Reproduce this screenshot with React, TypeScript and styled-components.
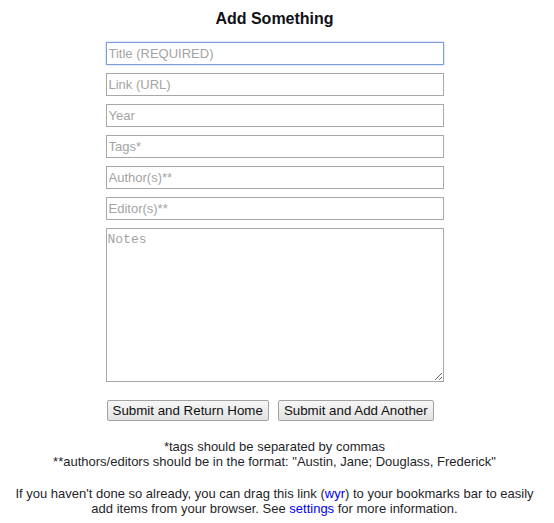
import styled, { createGlobalStyle } from "styled-components";

const GlobalStyle = createGlobalStyle`
  html, body {
    margin: 0;
    padding: 0;
    background: #ffffff;
  }
  body {
    font-family: "Liberation Sans", Arial, sans-serif;
    color: #1f1f2a;
  }
`;

const Page = styled.div`
  width: 533px;
  padding: 10px 0 0 8px;
  display: flex;
  flex-direction: column;
  align-items: center;
`;

const Form = styled.form`
  width: 338px;
  display: flex;
  flex-direction: column;
  gap: 8px;
`;

const Title = styled.h1`
  margin: 0 0 6px;
  font-size: 16px;
  line-height: 18px;
  font-weight: 700;
  text-align: center;
  color: #111118;
`;

const Input = styled.input<{ $focused?: boolean }>`
  box-sizing: border-box;
  width: 100%;
  height: 23px;
  margin: 0;
  padding: 0 2px;
  font-family: "Liberation Sans", Arial, sans-serif;
  font-size: 13px;
  color: #222;
  background: #fff;
  border: 1px solid ${(p) => (p.$focused ? "#7c9fdc" : "#a8a8a8")};
  box-shadow: ${(p) => (p.$focused ? "0 0 2px #a9c2ee" : "none")};
  border-radius: 0;
  outline: none;

  &::placeholder {
    color: #a4a4a4;
  }
`;

const Notes = styled.textarea`
  box-sizing: border-box;
  width: 100%;
  height: 154px;
  margin: 0;
  padding: 3px 1px;
  font-family: "Liberation Mono", "Courier New", monospace;
  font-size: 13px;
  border: 1px solid #a8a8a8;
  border-radius: 0;
  outline: none;
  resize: vertical;

  &::placeholder {
    color: #a4a4a4;
  }
`;

const Buttons = styled.div`
  display: flex;
  gap: 9px;
  margin: 10px 0 0 1px;
`;

const Button = styled.button`
  box-sizing: border-box;
  height: 21px;
  padding: 0 5px;
  font-family: "Liberation Sans", Arial, sans-serif;
  font-size: 13.33px;
  color: #111;
  background: linear-gradient(#f7f7f7, #e2e2e2);
  border: 1px solid #a3a3a3;
  border-radius: 2px;
  cursor: pointer;
`;

const Help = styled.p<{ $top: number }>`
  margin: ${(p) => p.$top}px 0 0;
  font-size: 13px;
  line-height: 15px;
  text-align: center;
`;

const Link = styled.a`
  color: #0000ee;
  text-decoration: none;
`;

const App = () => {
  return (
    <>
      <GlobalStyle />
      <Page>
        <Form onSubmit={(e) => e.preventDefault()}>
          <Title>Add Something</Title>
          <Input $focused name="title" placeholder="Title (REQUIRED)" />
          <Input name="link" placeholder="Link (URL)" />
          <Input name="year" placeholder="Year" />
          <Input name="tags" placeholder="Tags*" />
          <Input name="authors" placeholder="Author(s)**" />
          <Input name="editors" placeholder="Editor(s)**" />
          <Notes name="notes" placeholder="Notes" />
          <Buttons>
            <Button type="submit">Submit and Return Home</Button>
            <Button type="submit">Submit and Add Another</Button>
          </Buttons>
        </Form>
        <Help $top={18}>
          *tags should be separated by commas
          <br />
          **authors/editors should be in the format: "Austin, Jane; Douglass,
          Frederick"
        </Help>
        <Help $top={17}>
          If you haven't done so already, you can drag this link (
          <Link href="#">wyr</Link>) to your bookmarks bar to easily add items
          from your browser. See <Link href="#">settings</Link> for more
          information.
        </Help>
      </Page>
    </>
  );
};

export default App;
